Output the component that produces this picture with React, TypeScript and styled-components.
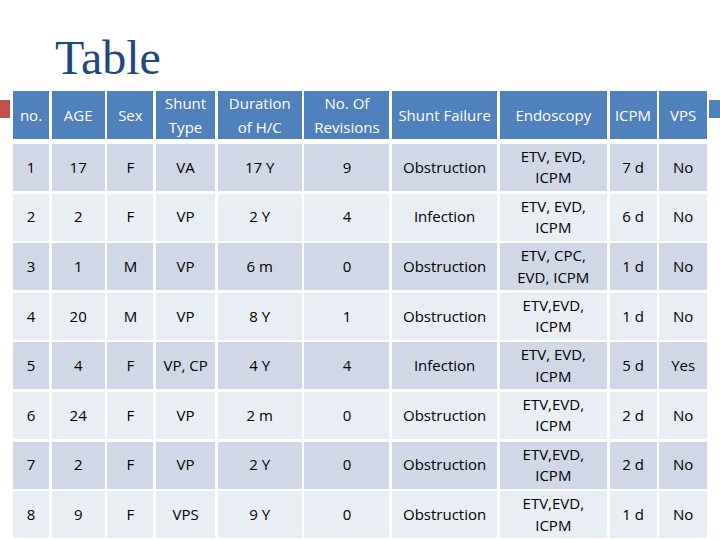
import React from "react";
import styled, { createGlobalStyle } from "styled-components";

const GlobalStyle = createGlobalStyle`
  html, body {
    margin: 0;
    padding: 0;
    background: #ffffff;
  }
  body {
    width: 720px;
    height: 540px;
    overflow: hidden;
    font-family: "Open Sans", "Noto Sans", sans-serif;
  }
`;

const Slide = styled.div`
  width: 720px;
  height: 540px;
  overflow: hidden;
  background: #ffffff;
`;

const Title = styled.h1`
  margin: 0 0 9px 0;
  padding: 34px 0 0 55px;
  height: 48px;
  line-height: 48px;
  font-family: "Liberation Serif", "Times New Roman", serif;
  font-weight: normal;
  font-size: 48px;
  color: #1f497d;
`;

const Body = styled.div`
  display: flex;
  align-items: flex-start;
`;

const SideBar = styled.div<{ $color: string; $width: number }>`
  flex: none;
  width: ${(p) => p.$width}px;
  height: 18px;
  margin-top: 9px;
  background: ${(p) => p.$color};
`;

const Table = styled.div`
  flex: none;
  width: 694px;
  margin: 0 2px 0 3px;
  display: flex;
  flex-direction: column;
  gap: 2.6px;
`;

const COLUMNS = "36px 53px 46px 59px 84px 85px 105px 107px 47px 48px";

const Row = styled.div<{ $header?: boolean }>`
  display: grid;
  grid-template-columns: ${COLUMNS};
  column-gap: 2.7px;
  height: ${(p) => (p.$header ? 48 : 47)}px;
  margin-bottom: ${(p) => (p.$header ? 2.4 : 0)}px;
`;

const Cell = styled.div<{ $shade: "head" | "dark" | "light" }>`
  display: flex;
  align-items: center;
  justify-content: center;
  text-align: center;
  font-size: 15px;
  line-height: ${(p) => (p.$shade === "head" ? 24 : 21.5)}px;
  white-space: nowrap;
  color: ${(p) => (p.$shade === "head" ? "#ffffff" : "#000000")};
  background: ${(p) =>
    p.$shade === "head" ? "#4f81bd" : p.$shade === "dark" ? "#d0d8e8" : "#e9edf4"};
`;

const headers: string[][] = [
  ["no."],
  ["AGE"],
  ["Sex"],
  ["Shunt", "Type"],
  ["Duration", "of H/C"],
  ["No. Of", "Revisions"],
  ["Shunt Failure"],
  ["Endoscopy"],
  ["ICPM"],
  ["VPS"],
];

const rows: string[][][] = [
  [["1"], ["17"], ["F"], ["VA"], ["17 Y"], ["9"], ["Obstruction"], ["ETV, EVD,", "ICPM"], ["7 d"], ["No"]],
  [["2"], ["2"], ["F"], ["VP"], ["2 Y"], ["4"], ["Infection"], ["ETV, EVD,", "ICPM"], ["6 d"], ["No"]],
  [["3"], ["1"], ["M"], ["VP"], ["6 m"], ["0"], ["Obstruction"], ["ETV, CPC,", "EVD, ICPM"], ["1 d"], ["No"]],
  [["4"], ["20"], ["M"], ["VP"], ["8 Y"], ["1"], ["Obstruction"], ["ETV,EVD,", "ICPM"], ["1 d"], ["No"]],
  [["5"], ["4"], ["F"], ["VP, CP"], ["4 Y"], ["4"], ["Infection"], ["ETV, EVD,", "ICPM"], ["5 d"], ["Yes"]],
  [["6"], ["24"], ["F"], ["VP"], ["2 m"], ["0"], ["Obstruction"], ["ETV,EVD,", "ICPM"], ["2 d"], ["No"]],
  [["7"], ["2"], ["F"], ["VP"], ["2 Y"], ["0"], ["Obstruction"], ["ETV,EVD,", "ICPM"], ["2 d"], ["No"]],
  [["8"], ["9"], ["F"], ["VPS"], ["9 Y"], ["0"], ["Obstruction"], ["ETV,EVD,", "ICPM"], ["1 d"], ["No"]],
];

const Lines: React.FC<{ lines: string[] }> = ({ lines }) => (
  <span>
    {lines.map((line, i) => (
      <React.Fragment key={i}>
        {i > 0 && <br />}
        {line}
      </React.Fragment>
    ))}
  </span>
);

const App: React.FC = () => (
  <Slide>
    <GlobalStyle />
    <Title>Table</Title>
    <Body>
      <SideBar $color="#c0504d" $width={10} />
      <Table>
        <Row $header>
          {headers.map((h, i) => (
            <Cell key={i} $shade="head">
              <Lines lines={h} />
            </Cell>
          ))}
        </Row>
        {rows.map((row, r) => (
          <Row key={r}>
            {row.map((cell, c) => (
              <Cell key={c} $shade={r % 2 === 0 ? "dark" : "light"}>
                <Lines lines={cell} />
              </Cell>
            ))}
          </Row>
        ))}
      </Table>
      <SideBar $color="#4f81bd" $width={11} />
    </Body>
  </Slide>
);

export default App;
